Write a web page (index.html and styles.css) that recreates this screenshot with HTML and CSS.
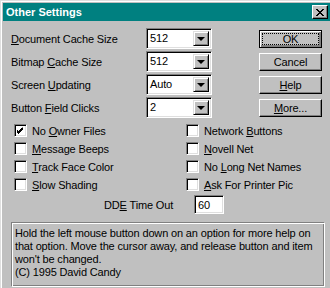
FILE: index.html
```html
<!DOCTYPE html>
<html>
  <head>
    <meta charset="UTF-8" />
    <title>Other Settings</title>
    <link rel="stylesheet" href="styles.css">
  </head>
  <body>
    <div class="window">
      <div class="titlebar">
        <span class="title">Other Settings</span>
        <span class="close">
          <svg width="8" height="7" viewBox="0 0 8 7">
            <path d="M0 0h2v1h-2zM6 0h2v1h-2zM1 1h2v1h-2zM5 1h2v1h-2zM2 2h4v1h-4zM3 3h2v1h-2zM2 4h4v1h-4zM1 5h2v1h-2zM5 5h2v1h-2zM0 6h2v1h-2zM6 6h2v1h-2z" fill="#000"/>
          </svg>
        </span>
      </div>

      <div class="content">
        <div class="top">
          <div class="fields">
            <div class="field">
              <span class="label"><u>D</u>ocument Cache Size</span>
              <span class="combo"><span class="value">512</span><span class="drop"><i class="arrow"></i></span></span>
            </div>
            <div class="field">
              <span class="label">Bitmap <u>C</u>ache Size</span>
              <span class="combo"><span class="value">512</span><span class="drop"><i class="arrow"></i></span></span>
            </div>
            <div class="field">
              <span class="label">Screen <u>U</u>pdating</span>
              <span class="combo"><span class="value">Auto</span><span class="drop"><i class="arrow"></i></span></span>
            </div>
            <div class="field">
              <span class="label">Button <u>F</u>ield Clicks</span>
              <span class="combo"><span class="value">2</span><span class="drop"><i class="arrow"></i></span></span>
            </div>
          </div>
          <div class="buttons">
            <span class="btn default"><span class="focus">OK</span></span>
            <span class="btn">Cancel</span>
            <span class="btn"><span><u>H</u>elp</span></span>
            <span class="btn"><span><u>M</u>ore...</span></span>
          </div>
        </div>

        <div class="checks">
          <div class="col">
            <div class="check"><span class="box">
              <svg width="7" height="7" viewBox="0 0 7 7"><path d="M6 0v3h-1v1h-1v1h-1v1h-1v1h-1v-1h-1v-1h-1v-3h1v1h1v1h1v-1h1v-1h1v-1h1z" fill="#000"/></svg>
            </span><span class="text">No <u>O</u>wner Files</span></div>
            <div class="check"><span class="box"></span><span class="text"><u>M</u>essage Beeps</span></div>
            <div class="check"><span class="box"></span><span class="text"><u>T</u>rack Face Color</span></div>
            <div class="check"><span class="box"></span><span class="text"><u>S</u>low Shading</span></div>
          </div>
          <div class="col">
            <div class="check"><span class="box"></span><span class="text">Network <u>B</u>uttons</span></div>
            <div class="check"><span class="box"></span><span class="text"><u>N</u>ovell Net</span></div>
            <div class="check"><span class="box"></span><span class="text">No <u>L</u>ong Net Names</span></div>
            <div class="check"><span class="box"></span><span class="text"><u>A</u>sk For Printer Pic</span></div>
          </div>
        </div>

        <div class="dde">
          <span class="dde-label">DD<u>E</u> Time Out</span>
          <span class="textbox">60</span>
        </div>

        <div class="helpbox">
          Hold the left mouse button down on an option for more help on that option. Move the cursor away, and release button and item won't be changed.<br>
          (C) 1995 David Candy
        </div>
      </div>
    </div>
  </body>
</html>
```

FILE: styles.css
```css
html, body {
  margin: 0;
  padding: 0;
  overflow: hidden;
  background: #c0c0c0;
}
body {
  width: 330px;
  height: 288px;
  font-family: "Liberation Sans", Arial, sans-serif;
  font-size: 11px;
  letter-spacing: -0.15px;
  color: #000;
}
u {
  text-decoration: underline;
  text-underline-offset: 1px;
}

.window {
  box-sizing: border-box;
  width: 333px;
  height: 292px;
  padding: 2px;
  background: #c0c0c0;
  border: 1px solid;
  border-color: #dfdfdf #000 #000 #dfdfdf;
  box-shadow: inset 1px 1px #fff, inset -1px -1px #808080;
}

.titlebar {
  height: 18px;
  background: #008080;
  display: flex;
  align-items: center;
  justify-content: space-between;
  padding: 0 2px 0 3px;
}
.title {
  color: #fff;
  font-weight: bold;
  letter-spacing: 0;
}
.close {
  box-sizing: border-box;
  width: 16px;
  height: 14px;
  background: #c0c0c0;
  display: flex;
  align-items: center;
  justify-content: center;
  border: 1px solid;
  border-color: #fff #000 #000 #fff;
  box-shadow: inset -1px -1px #808080;
}

.content {
  padding: 7px 0 0 8px;
}

.top {
  display: flex;
}
.fields {
  display: flex;
  flex-direction: column;
  gap: 2px;
}
.field {
  display: flex;
  align-items: center;
  height: 21px;
}
.label {
  width: 135px;
}
.combo {
  box-sizing: border-box;
  width: 66px;
  height: 21px;
  display: flex;
  background: #fff;
  border: 1px solid;
  border-color: #808080 #fff #fff #808080;
  box-shadow: inset 1px 1px #000, inset -1px -1px #dfdfdf;
  padding: 2px;
}
.value {
  flex: 1;
  line-height: 15px;
  padding-left: 1px;
}
.drop {
  box-sizing: border-box;
  width: 16px;
  height: 15px;
  background: #c0c0c0;
  border: 1px solid;
  border-color: #dfdfdf #000 #000 #dfdfdf;
  box-shadow: inset 1px 1px #fff, inset -1px -1px #808080;
  display: flex;
  align-items: center;
  justify-content: center;
}
.arrow {
  width: 0;
  height: 0;
  border-left: 4px solid transparent;
  border-right: 4px solid transparent;
  border-top: 4px solid #000;
}

.buttons {
  margin-left: 47px;
  margin-top: 2px;
  display: flex;
  flex-direction: column;
  gap: 5px;
}
.btn {
  box-sizing: border-box;
  width: 63px;
  height: 18px;
  display: flex;
  align-items: center;
  justify-content: center;
  border: 1px solid;
  border-color: #fff #000 #000 #fff;
  box-shadow: inset -1px -1px #808080;
}
.btn.default {
  border: 1px solid #000;
  box-shadow: inset 1px 1px #fff, inset -2px -2px #808080;
  padding: 3px;
}
.focus {
  box-sizing: border-box;
  width: 100%;
  height: 100%;
  display: flex;
  align-items: center;
  justify-content: center;
  outline: 1px dotted #000;
}

.checks {
  display: flex;
  margin-top: 6px;
  padding-left: 3px;
}
.col {
  display: flex;
  flex-direction: column;
  gap: 5px;
}
.col + .col {
  margin-left: 59px;
}
.check {
  display: flex;
  align-items: center;
  height: 13px;
  width: 113px;
  white-space: nowrap;
}
.box {
  box-sizing: border-box;
  flex: none;
  width: 13px;
  height: 13px;
  margin-right: 5px;
  background: #fff;
  border: 1px solid;
  border-color: #808080 #fff #fff #808080;
  box-shadow: inset 1px 1px #000, inset -1px -1px #dfdfdf;
  display: flex;
  align-items: center;
  justify-content: center;
}

.dde {
  display: flex;
  align-items: center;
  margin-top: 4px;
  padding-left: 93px;
}
.dde-label {
  width: 90px;
}
.textbox {
  box-sizing: border-box;
  width: 30px;
  height: 19px;
  padding: 2px 3px;
  line-height: 15px;
  background: #fff;
  border: 1px solid;
  border-color: #808080 #fff #fff #808080;
  box-shadow: inset 1px 1px #000, inset -1px -1px #dfdfdf;
}

.helpbox {
  box-sizing: border-box;
  width: 314px;
  height: 65px;
  margin-top: 8px;
  padding: 4px 3px;
  line-height: 13px;
  border: 1px solid;
  border-color: #808080 #fff #fff #808080;
  box-shadow: inset 1px 1px #fff, inset -1px -1px #808080;
}
```
